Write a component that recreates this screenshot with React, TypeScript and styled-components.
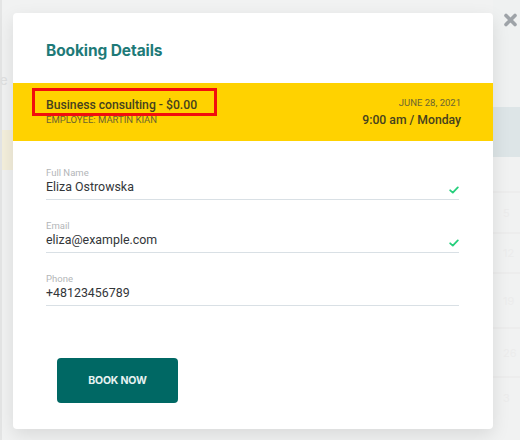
import React from "react";
import styled, { createGlobalStyle } from "styled-components";

const GlobalStyle = createGlobalStyle`
  html, body { margin: 0; padding: 0; }
  body {
    width: 520px;
    height: 440px;
    overflow: hidden;
    background: #f0f1f1;
    font-family: Inter, "Noto Sans", Arial, sans-serif;
  }
`;

const bodyFont = `Roboto, "Liberation Sans", Arial, sans-serif`;

const Page = styled.div`
  position: relative;
  width: 520px;
  height: 440px;
  overflow: hidden;
  background: #f1f2f2;
`;

/* faint calendar page behind the overlay */
const Backdrop = styled.div`
  display: flex;
  justify-content: space-between;
  height: 100%;
  border-left: 2px solid #e4e5e5;
  box-sizing: border-box;
`;

const Strip = styled.div<{ $w: number }>`
  width: ${(p) => p.$w}px;
  display: flex;
  flex-direction: column;
`;

const Block = styled.div<{ $h: number; $bg?: string; $line?: boolean }>`
  height: ${(p) => p.$h}px;
  flex-shrink: 0;
  background: ${(p) => p.$bg || "transparent"};
  border-bottom: ${(p) => (p.$line ? "2px solid #ededed" : "none")};
  box-sizing: border-box;
  display: flex;
  align-items: center;
  padding-left: 10px;
  font-size: 11px;
  color: #ececec;
`;

const FaintLetter = styled.span`
  font-size: 13px;
  color: #dfe0e0;
  margin-left: -12px;
`;

const Modal = styled.div`
  position: absolute;
  top: 13px;
  left: 13px;
  width: 480px;
  height: 416px;
  background: #ffffff;
  border-radius: 4px;
  box-shadow: 0 6px 18px rgba(0, 0, 0, 0.1);
  display: flex;
  flex-direction: column;
  overflow: hidden;
`;

const Header = styled.div`
  padding: 28px 33px 22px;
`;

const Title = styled.h2`
  margin: 0;
  font-size: 15.5px;
  line-height: 20px;
  font-weight: 700;
  color: #1e7a78;
  letter-spacing: -0.1px;
`;

const Band = styled.div`
  height: 58px;
  background: #ffd200;
  padding: 0 32px 0 33px;
  display: flex;
  align-items: center;
  justify-content: space-between;
  font-family: ${bodyFont};
`;

const Col = styled.div<{ $right?: boolean }>`
  display: flex;
  flex-direction: column;
  align-items: ${(p) => (p.$right ? "flex-end" : "flex-start")};
`;

const Service = styled.span`
  position: relative;
  font-size: 12.2px;
  line-height: 16px;
  font-weight: 500;
  color: #45411f;
  &::after {
    content: "";
    position: absolute;
    left: -14px;
    top: -9px;
    width: 185px;
    height: 28px;
    border: 3px solid #f20d0d;
    box-sizing: border-box;
  }
`;

const Small = styled.span`
  font-size: 9.5px;
  line-height: 14px;
  color: #6c6530;
  text-transform: uppercase;
`;

const Time = styled.span`
  font-size: 12.2px;
  line-height: 16px;
  font-weight: 500;
  color: #45411f;
  margin-top: 2px;
`;

const Form = styled.div`
  padding: 27px 34px 0 33px;
  display: flex;
  flex-direction: column;
  gap: 21px;
  font-family: ${bodyFont};
`;

const Field = styled.div`
  display: flex;
  flex-direction: column;
  border-bottom: 1px solid #d9e0e5;
`;

const Label = styled.label`
  font-size: 9.5px;
  line-height: 10px;
  color: #b3b6b8;
`;

const ValueRow = styled.div`
  display: flex;
  align-items: center;
  justify-content: space-between;
  height: 18px;
  padding-bottom: 3px;
`;

const Value = styled.span`
  font-size: 12.4px;
  line-height: 18px;
  color: #333639;
`;

const Check = styled.svg`
  width: 10px;
  height: 8px;
  margin-top: 5px;
`;

const Footer = styled.div`
  padding: 52px 0 0 44px;
`;

const Button = styled.button`
  width: 121px;
  height: 45px;
  border: none;
  border-radius: 4px;
  background: #006864;
  color: #e6f2f1;
  font-family: inherit;
  font-size: 10.5px;
  font-weight: 700;
  letter-spacing: -0.2px;
  cursor: pointer;
`;

const Close = styled.svg`
  position: absolute;
  top: 13px;
  left: 503px;
  width: 15px;
  height: 14px;
`;

const CheckIcon = () => (
  <Check viewBox="0 0 10 8">
    <path
      d="M1.2 4.3 L3.8 6.6 L8.8 1.4"
      fill="none"
      stroke="#25cf7c"
      strokeWidth="1.8"
      strokeLinecap="round"
      strokeLinejoin="round"
    />
  </Check>
);

const fields = [
  { label: "Full Name", value: "Eliza Ostrowska", ok: true },
  { label: "Email", value: "eliza@example.com", ok: true },
  { label: "Phone", value: "+48123456789", ok: false },
];

export default function App() {
  return (
    <>
      <GlobalStyle />
      <Page>
        <Backdrop>
          <Strip $w={11}>
            <Block $h={70} />
            <Block $h={20}>
              <FaintLetter>e</FaintLetter>
            </Block>
            <Block $h={40} />
            <Block $h={40} $bg="#f4efdc" />
          </Strip>
          <Strip $w={27}>
            <Block $h={107} $bg="#eff1f1" />
            <Block $h={50} $bg="#dde5e7" />
            <Block $h={36} $line />
            <Block $h={41} $line>5</Block>
            <Block $h={40} $line>12</Block>
            <Block $h={55} $line>19</Block>
            <Block $h={49} $line>26</Block>
            <Block $h={40}>3</Block>
          </Strip>
        </Backdrop>

        <Modal>
          <Header>
            <Title>Booking Details</Title>
          </Header>
          <Band>
            <Col>
              <Service>Business consulting - $0.00</Service>
              <Small>Employee: Martin Kian</Small>
            </Col>
            <Col $right>
              <Small>June 28, 2021</Small>
              <Time>9:00 am / Monday</Time>
            </Col>
          </Band>
          <Form>
            {fields.map((f) => (
              <Field key={f.label}>
                <Label>{f.label}</Label>
                <ValueRow>
                  <Value>{f.value}</Value>
                  {f.ok && <CheckIcon />}
                </ValueRow>
              </Field>
            ))}
          </Form>
          <Footer>
            <Button>BOOK NOW</Button>
          </Footer>
        </Modal>

        <Close viewBox="0 0 15 14">
          <path
            d="M3 2.5 L12 11.5 M12 2.5 L3 11.5"
            stroke="#9ea3a8"
            strokeWidth="3.6"
            strokeLinecap="round"
          />
        </Close>
      </Page>
    </>
  );
}
